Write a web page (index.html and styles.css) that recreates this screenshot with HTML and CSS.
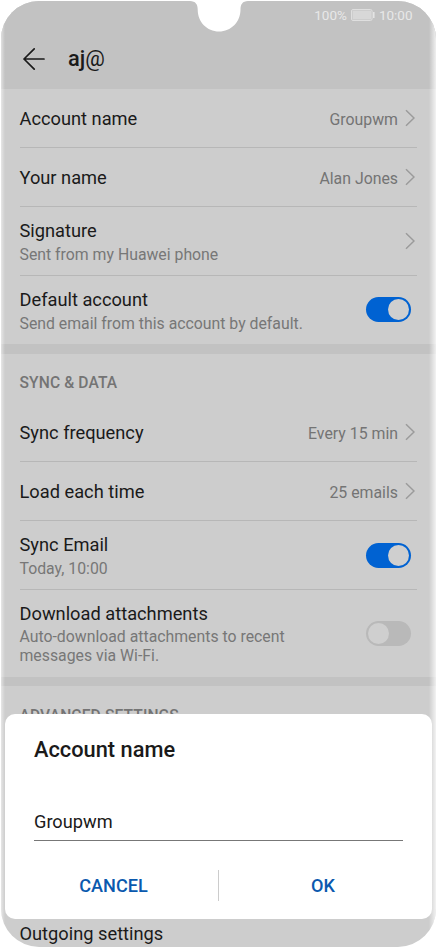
FILE: index.html
```html
<!DOCTYPE html>
<html lang="en">
<head>
<meta charset="utf-8">
<title>Account settings</title>
<link rel="stylesheet" href="styles.css">
</head>
<body>
<main class="phone">
  <header class="header">
    <svg class="notch" width="58" height="31" viewBox="0 0 58 31"><path d="M0 0C5.500 0 7.700 3.500 7.700 8.500C7.700 21 17 30.500 29 30.500S50.500 21 50.500 8.500C50.500 3.500 52.500 0 58 0Z" fill="#fff"/></svg>
    <div class="status">
      <span>100%</span>
      <svg width="24" height="12" viewBox="0 0 24 12"><rect x=".5" y=".5" width="20.500" height="11" rx="1.500" fill="none" stroke="#dfdfdf"/><rect x="1.500" y="1.500" width="18.500" height="9" fill="#d8d8d8"/><path d="M22.800 3v6" stroke="#e6e6e6" stroke-width="1.500"/></svg>
      <span>10:00</span>
    </div>
    <div class="bar">
      <svg width="22" height="24" viewBox="0 0 22 24" fill="none" stroke="#1a1a1a" stroke-width="1.700" stroke-linecap="round" stroke-linejoin="round"><path d="M21 12H1M11.200 1.800L1 12L11.200 22.200"/></svg>
      <h1>aj<span class="at">@</span></h1>
    </div>
  </header>

  <section class="group">
    <div class="row"><span class="label">Account name</span><span class="value">Groupwm</span><svg class="chevron" viewBox="0 0 10 18"><path d="M1 1.200L9 9L1 16.800"/></svg></div>
    <div class="row"><span class="label">Your name</span><span class="value">Alan Jones</span><svg class="chevron" viewBox="0 0 10 18"><path d="M1 1.200L9 9L1 16.800"/></svg></div>
    <div class="row tall"><div class="text"><span class="label">Signature</span><span class="hint">Sent from my Huawei phone</span></div><svg class="chevron" viewBox="0 0 10 18"><path d="M1 1.200L9 9L1 16.800"/></svg></div>
    <div class="row default last"><div class="text"><span class="label">Default account</span><span class="hint">Send email from this account by default.</span></div><span class="toggle on"></span></div>
  </section>

  <section class="group">
    <h2>SYNC &amp; DATA</h2>
    <div class="row"><span class="label">Sync frequency</span><span class="value">Every 15 min</span><svg class="chevron" viewBox="0 0 10 18"><path d="M1 1.200L9 9L1 16.800"/></svg></div>
    <div class="row"><span class="label">Load each time</span><span class="value">25 emails</span><svg class="chevron" viewBox="0 0 10 18"><path d="M1 1.200L9 9L1 16.800"/></svg></div>
    <div class="row tall"><div class="text"><span class="label">Sync Email</span><span class="hint">Today, 10:00</span></div><span class="toggle on"></span></div>
    <div class="row taller last"><div class="text"><span class="label">Download attachments</span><span class="hint">Auto-download attachments to recent<br>messages via Wi-Fi.</span></div><span class="toggle"></span></div>
  </section>

  <section class="group advanced">
    <h2>ADVANCED SETTINGS</h2>
    <div class="row last"><span class="label">Outgoing settings</span></div>
  </section>

  <div class="dialog">
    <h3>Account name</h3>
    <div class="field">Groupwm</div>
    <div class="actions"><span class="action">CANCEL</span><span class="action">OK</span></div>
  </div>
</main>
</body>
</html>
```
FILE: styles.css
```css
* { box-sizing: border-box; }

body {
  margin: 0;
  background: #fff;
  font-family: Roboto, "Liberation Sans", sans-serif;
  color: #1a1a1a;
}

.phone {
  position: relative;
  width: 435px;
  height: 946px;
  margin: 1px;
  overflow: hidden;
  border-radius: 38px;
  background: #cdcdcd;
}

/* Soft light edge along both sides of the display */
.phone::after {
  content: "";
  position: absolute;
  inset: 0;
  background: linear-gradient(90deg, rgba(255,255,255,.5), rgba(255,255,255,0) 4px, rgba(255,255,255,0) 428px, rgba(255,255,255,.75));
}

.header {
  position: relative;
  height: 88px;
  background: #c2c2c2;
}

.notch { position: absolute; left: 188.500px; top: 0; }

.status {
  display: flex;
  align-items: center;
  justify-content: flex-end;
  height: 28px;
  padding-right: 23.500px;
  gap: 4px;
  font-size: 13.5px;
  color: #e8e8e8;
}

.bar {
  display: flex;
  align-items: center;
  height: 60px;
  padding: 0 21px 0 21.500px;
  gap: 23.500px;
}

h1, h2, h3 { margin: 0; font-weight: 500; }
h1 { font-size: 21.8px; line-height: 26px; }
.at { font-weight: 400; }

.group + .group { border-top: 10px solid #c2c2c2; }
.group + .advanced { border-top-width: 9px; }

h2 {
  height: 49px;
  padding: 20px 18.500px 0;
  font-size: 15.6px;
  line-height: 18px;
  letter-spacing: .12px;
  color: #747474;
}

.row {
  display: flex;
  align-items: center;
  height: 59px;
  margin: 0 19px 0 18.500px;
  padding-right: 2px;
  border-bottom: 1px solid #b7b7b7;
}
.row.tall { height: 69px; }
.row.default { height: 68px; }
.row.taller { height: 87px; }
.row.last { border-bottom-color: transparent; }

.text { display: flex; flex-direction: column; }
.label { font-size: 18.25px; line-height: 24px; position: relative; top: 1px; }
.hint { font-size: 15.82px; line-height: 19px; margin-top: 3px; color: #777; white-space: nowrap; }
.taller .hint { margin-top: 2px; }
.value { margin-left: auto; font-size: 15.85px; color: #747474; position: relative; top: 1px; }

.chevron {
  width: 10px;
  height: 18px;
  margin-left: 7px;
  fill: none;
  stroke: #9b9b9b;
  stroke-width: 1.5;
}
.text + .chevron { margin-left: auto; }

.toggle {
  display: flex;
  width: 45px;
  height: 25px;
  margin: 0 4px 0 auto;
  padding: 2px;
  border-radius: 13px;
  background: #b9b9b9;
}
.toggle::before {
  content: "";
  width: 21px;
  height: 21px;
  border-radius: 50%;
  background: #cfcfcf;
}
.toggle.on { justify-content: flex-end; background: #0062d2; }

.advanced h2 { padding-top: 21px; }
.advanced .row { margin-top: 169px; }

.dialog {
  position: absolute;
  z-index: 1;
  left: 4px;
  top: 713px;
  width: 427px;
  height: 205px;
  padding: 23px 29px 0;
  border-radius: 10px;
  background: #fff;
}
h3 { font-size: 21.8px; line-height: 26px; }

.field {
  height: 35px;
  margin-top: 43px;
  border-bottom: 1px solid #777;
  font-size: 18.2px;
  line-height: 32px;
}

.actions {
  display: grid;
  grid-template-columns: 1fr 1fr;
  height: 30px;
  margin: 29px -24px 0 -25px;
}
.action {
  font-size: 18.1px;
  font-weight: 500;
  line-height: 31px;
  text-align: center;
  color: #0a59ae;
}
.action + .action { border-left: 1px solid #ccc; }
```
